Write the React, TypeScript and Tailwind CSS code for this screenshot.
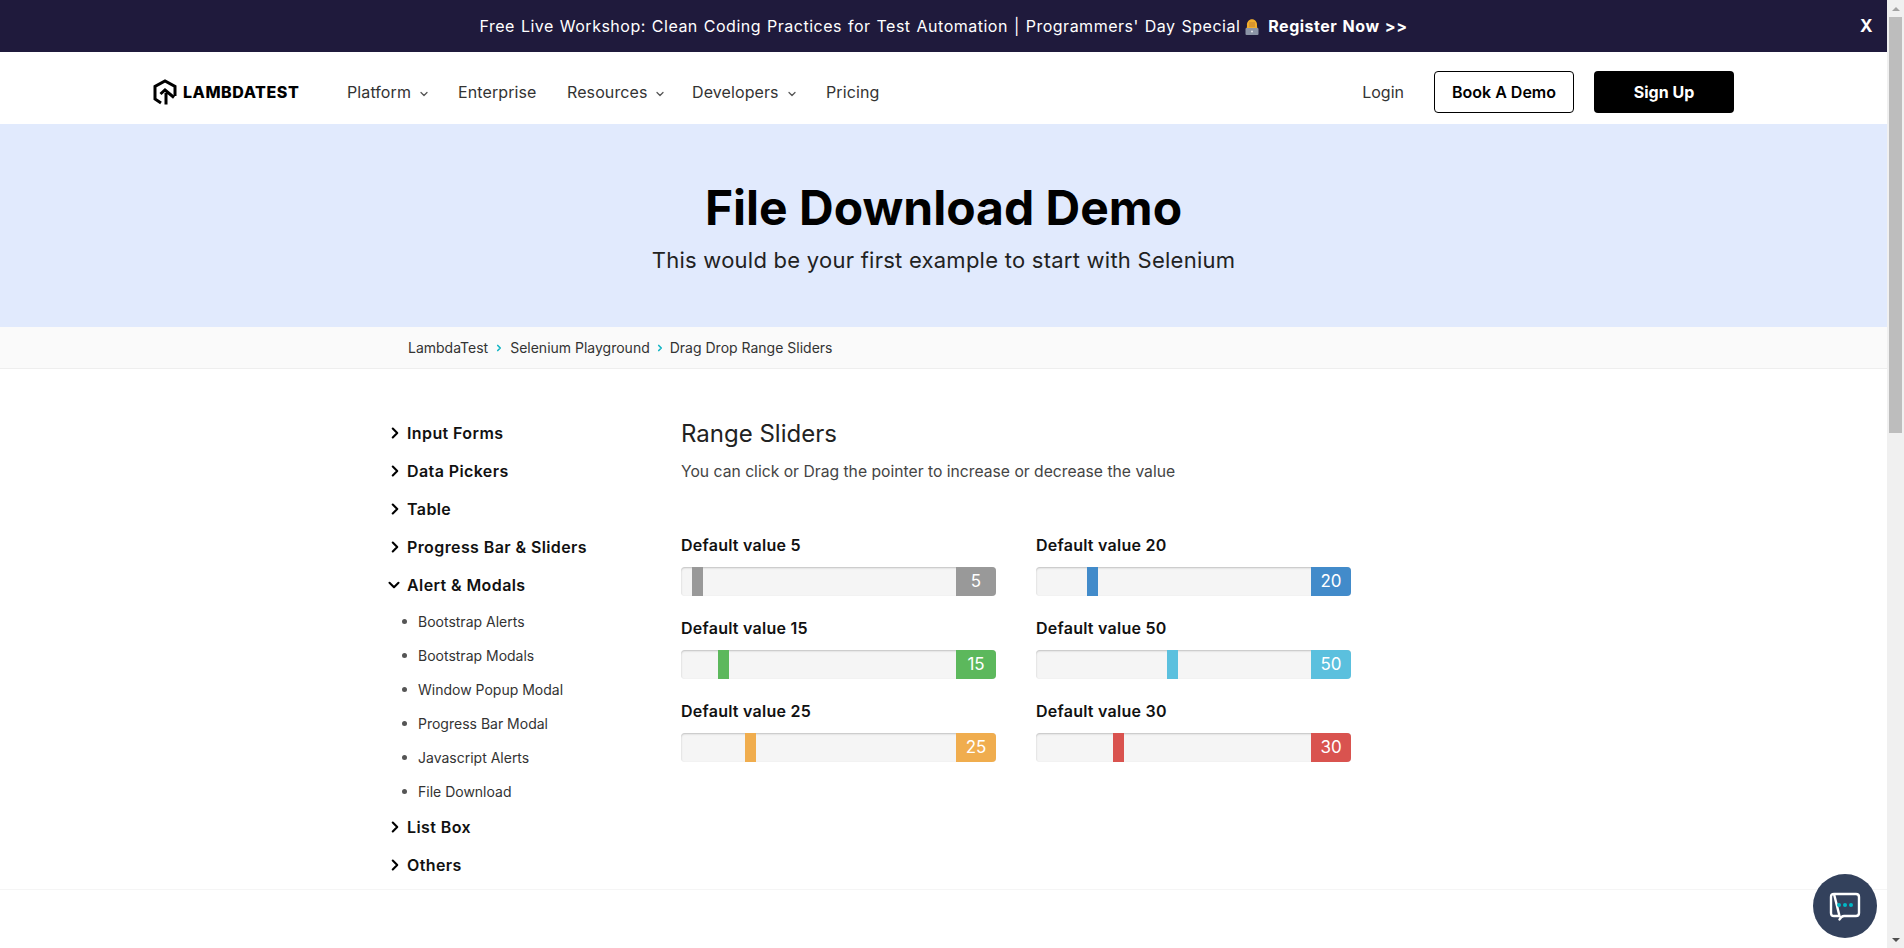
import { ChevronDown, ChevronRight } from "lucide-react";

const navLinks = [
  { label: "Platform", caret: true, cls: "w-[111px]" },
  { label: "Enterprise", caret: false, cls: "w-[109px]" },
  { label: "Resources", caret: true, cls: "w-[125px]" },
  { label: "Developers", caret: true, cls: "w-[134px]" },
  { label: "Pricing", caret: false, cls: "" },
];

const subItems = [
  "Bootstrap Alerts",
  "Bootstrap Modals",
  "Window Popup Modal",
  "Progress Bar Modal",
  "Javascript Alerts",
  "File Download",
];

const sliders = [
  { value: 5, thumb: 11, bg: "bg-[#999999]" },
  { value: 20, thumb: 51, bg: "bg-[#428bca]" },
  { value: 15, thumb: 37, bg: "bg-[#5cb85c]" },
  { value: 50, thumb: 131, bg: "bg-[#5bc0de]" },
  { value: 25, thumb: 64, bg: "bg-[#f0ad4e]" },
  { value: 30, thumb: 77, bg: "bg-[#d9534f]" },
];

const Logo = () => (
  <div className="flex items-center gap-[6px]">
    <svg width="24" height="26" viewBox="0 0 24 26" fill="none" stroke="#000" strokeWidth="3">
      <path d="M8 24 L2 20 V7.5 L12 2 L22 7.5 V17" />
      <path d="M13 25.5 V14 M7.5 15 L12 11 L21 18.5" />
    </svg>
    <span className="text-[16px] font-extrabold tracking-[0.55px] text-black">LAMBDATEST</span>
  </div>
);

const MenuRow = ({ label, open }: { label: string; open?: boolean }) => (
  <div className="flex h-[38px] items-center text-[16px] font-semibold tracking-[0.4px] text-[#111]">
    {open ? (
      <ChevronDown size={18} strokeWidth={2.8} className="ml-[-13px] mr-[4px] text-black" />
    ) : (
      <ChevronRight size={18} strokeWidth={2.8} className="ml-[-12px] mr-[3px] text-black" />
    )}
    {label}
  </div>
);

const RangeSlider = ({ value, thumb, bg }: { value: number; thumb: number; bg: string }) => (
  <div>
    <div className="flex h-[21px] items-center text-[16px] font-semibold tracking-[0.25px] text-[#111]">
      Default value {value}
    </div>
    <div className="mt-[12px] flex h-[29px] overflow-hidden rounded-[4px] bg-[#f5f5f5] shadow-[inset_0_1px_2px_rgba(0,0,0,0.22)]">
      <div className="h-full flex-1">
        <div className={`h-full w-[11px] ${bg}`} style={{ marginLeft: thumb }} />
      </div>
      <div className={`flex h-full w-[40px] items-center justify-center text-[17px] text-white ${bg}`}>{value}</div>
    </div>
  </div>
);

const Scrollbar = () => (
  <div className="flex h-full w-[17px] shrink-0 flex-col items-center bg-[#f0f0f0]">
    <div className="flex h-[17px] items-center justify-center">
      <div className="h-0 w-0 border-x-[4px] border-b-[4px] border-x-transparent border-b-[#a3a3a3]" />
    </div>
    <div className="h-[416px] w-[13px] bg-[#bdbdbd]" />
    <div className="flex-1" />
    <div className="flex h-[17px] items-center justify-center">
      <div className="h-0 w-0 border-x-[4px] border-t-[4px] border-x-transparent border-t-[#505050]" />
    </div>
  </div>
);

export default function App() {
  return (
    <div className="relative flex h-[948px] overflow-hidden bg-white font-['Inter',sans-serif]">
      <div className="min-w-0 flex-1">
        <div className="relative flex h-[52px] items-center justify-center bg-[#1f1a3c] text-[16px] tracking-[0.5px] text-white [word-spacing:1px]">
          <span>Free Live Workshop: Clean Coding Practices for Test Automation | Programmers' Day Special</span>
          <svg width="14" height="18" viewBox="0 0 14 18" className="ml-[5px]">
            <path d="M2 9 C1 0 13 0 12 9 L12.5 12 H1.5 Z" fill="#f1ad2b" />
            <rect x="4" y="5" width="6" height="5" fill="#d9962f" />
            <rect x="0.5" y="11" width="13" height="7" rx="1" fill="#8b94a6" />
            <circle cx="7" cy="14.5" r="1" fill="#e5e7eb" />
          </svg>
          <span className="ml-[9px] font-bold">Register Now &gt;&gt;</span>
          <span className="absolute right-[14px] top-[14px] text-[17px] font-bold">X</span>
        </div>

        <header className="flex h-[72px] items-center px-[153px] pt-[8px]">
          <div className="w-[194px]">
            <Logo />
          </div>
          <nav className="flex items-center text-[16px] tracking-[0.1px] text-[#333]">
            {navLinks.map((link) => (
              <div key={link.label} className={`flex items-center ${link.cls}`}>
                {link.label}
                {link.caret && <ChevronDown size={12} strokeWidth={2.5} className="ml-[7px] mt-[3px] text-[#555]" />}
              </div>
            ))}
          </nav>
          <div className="ml-auto flex items-center">
            <span className="mr-[30px] text-[16px] text-[#333]">Login</span>
            <button className="mr-[20px] h-[42px] w-[140px] rounded-[4px] border border-black text-[16px] font-semibold text-black">
              Book A Demo
            </button>
            <button className="h-[42px] w-[140px] rounded-[4px] bg-black text-[16px] font-bold text-white">
              Sign Up
            </button>
          </div>
        </header>

        <section className="flex h-[203px] flex-col items-center bg-[#e1eafd] pt-[55px]">
          <h1 className="text-[48px] font-bold leading-[58px] text-black">File Download Demo</h1>
          <p className="mt-[8px] text-[22px] leading-[30px] tracking-[0.25px] text-[#222]">
            This would be your first example to start with Selenium
          </p>
        </section>

        <div className="flex h-[42px] items-center border-b border-[#eeeeee] bg-[#fafafa] pl-[408px] text-[14px] text-[#333]">
          <span>LambdaTest</span>
          <ChevronRight size={10} strokeWidth={4} className="mx-[6px] text-[#12b5c4]" />
          <span>Selenium Playground</span>
          <ChevronRight size={10} strokeWidth={4} className="mx-[5px] text-[#12b5c4]" />
          <span>Drag Drop Range Sliders</span>
        </div>

        <main className="flex h-[521px] border-b border-[#f5f5f5] pl-[398px]">
          <aside className="w-[283px] pt-[45px]">
            <MenuRow label="Input Forms" />
            <MenuRow label="Data Pickers" />
            <MenuRow label="Table" />
            <MenuRow label="Progress Bar & Sliders" />
            <MenuRow label="Alert & Modals" open />
            <ul>
              {subItems.map((item) => (
                <li key={item} className="flex h-[34px] items-center text-[14px] text-[#333]">
                  <span className="ml-[4px] mr-[11px] h-[5px] w-[5px] rounded-full bg-[#555]" />
                  {item}
                </li>
              ))}
            </ul>
            <MenuRow label="List Box" />
            <MenuRow label="Others" />
          </aside>
          <div className="pt-[50px]">
            <h2 className="text-[24px] leading-[30px] text-[#222]">Range Sliders</h2>
            <p className="mt-[11px] text-[15.7px] leading-[24px] text-[#444]">
              You can click or Drag the pointer to increase or decrease the value
            </p>
            <div className="mt-[50px] grid w-[670px] grid-cols-[315px_315px] gap-x-[40px] gap-y-[21px]">
              {sliders.map((slider) => (
                <RangeSlider key={slider.value} value={slider.value} thumb={slider.thumb} bg={slider.bg} />
              ))}
            </div>
          </div>
        </main>
      </div>

      <Scrollbar />

      <button className="absolute bottom-[10px] right-[27px] flex h-[64px] w-[64px] items-center justify-center rounded-full bg-[#33415c]">
        <svg width="32" height="29" viewBox="0 0 32 29" fill="none">
          <path
            d="M5 2 H27 Q30 2 30 5 V21 Q30 24 27 24 H15 Q12.5 24 10.5 27.5 M10.5 24 H5 Q2 24 2 21 V5 Q2 2 5 2 Z"
            stroke="#fff"
            strokeWidth="2.4"
            strokeLinecap="round"
            strokeLinejoin="round"
          />
          <circle cx="10" cy="13" r="2" fill="#00b8c6" />
          <circle cx="16" cy="13" r="2" fill="#00b8c6" />
          <circle cx="22" cy="13" r="2" fill="#00b8c6" />
        </svg>
      </button>
    </div>
  );
}
